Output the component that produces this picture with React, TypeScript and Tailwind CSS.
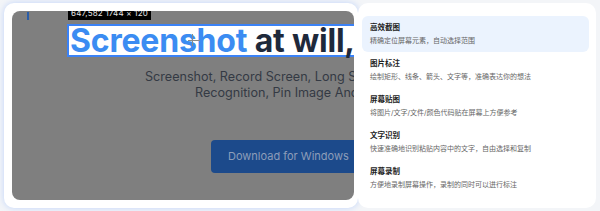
import React from 'react';

interface Feature {
  title: string;
  desc: string;
}

const features: Feature[] = [
  { title: '高效截图', desc: '精确定位屏幕元素，自动选择范围' },
  { title: '图片标注', desc: '绘制矩形、线条、箭头、文字等，准确表达你的想法' },
  { title: '屏幕贴图', desc: '将图片/文字/文件/颜色代码贴在屏幕上方便参考' },
  { title: '文字识别', desc: '快速准确地识别粘贴内容中的文字，自由选择和复制' },
  { title: '屏幕录制', desc: '方便地录制屏幕操作，录制的同时可以进行标注' },
];

const sans = { fontFamily: 'Inter, "Noto Sans CJK SC", sans-serif' };

export default function App() {
  return (
    <div className="w-[600px] h-[211px] bg-[#f3f5f8] overflow-hidden" style={sans}>
      <div className="flex pt-[3px] pl-[4px] h-[208px]">
        {/* preview card */}
        <div className="w-[354px] h-[205px] bg-white rounded-[10px] pl-2 pr-0 py-2 shadow-[0_0_6px_rgba(96,150,255,0.35)]">
          <div className="relative w-[342px] h-[189px] bg-[#7f7f7f] rounded-lg overflow-hidden">
            <div className="absolute left-[15px] top-[1px] w-[2px] h-[8px] bg-[#2a5da8]"></div>
            <div className="absolute left-[56px] top-[-5px] h-[14px] px-[3px] bg-black text-[#e5e5e5] text-[8px] leading-[14px] whitespace-nowrap tracking-[0.2px]">
              647,582 1744 × 120
            </div>

            <div className="pt-[13px] pl-[55px]">
              <div className="w-[320px] h-[33px] border-2 border-[#3b82f6] bg-white whitespace-nowrap text-[32px] font-bold leading-[29px] pl-[1px] tracking-[-0.2px]">
                <span className="text-[#3b8cf2]">Screenshot</span>{' '}
                <span className="text-[#1e293b]">at will, anything</span>
              </div>
            </div>

            <div className="mt-[12px] text-[12.6px] leading-[16px] text-[#343a44] whitespace-nowrap">
              <div className="ml-[133px]">Screenshot, Record Screen, Long Screenshot, Text</div>
              <div className="ml-[183px]">Recognition, Pin Image And Color Picking</div>
            </div>

            <div className="ml-[199px] mt-[39px] w-[180px] h-[33px] rounded-[4px] bg-[#1c4a8b] pl-[17px] text-[11px] leading-[33px] text-[#8c9db9] whitespace-nowrap">
              Download for Windows
            </div>

            {/* crosshair */}
            <div className="absolute left-[176px] top-[29px] w-[12px] h-px bg-[#8a8a8a]"></div>
            <div className="absolute left-[180px] top-[23px] w-px h-[12px] bg-[#8a8a8a]"></div>
          </div>
        </div>

        {/* feature list */}
        <div className="w-[238px] h-[205px] bg-white rounded-[10px] pt-[13px] pl-[4px] pr-[7px]">
          {features.map((f, i) => (
            <div
              key={f.title}
              className={`h-[36px] rounded-[6px] px-2 pt-[7px] ${i === 0 ? 'bg-[#ebf3fe]' : ''}`}
            >
              <div className="text-[7.5px] leading-[10px] font-bold text-[#222]">{f.title}</div>
              <div className="mt-[3px] text-[7px] leading-[10px] text-[#666] whitespace-nowrap">{f.desc}</div>
            </div>
          ))}
        </div>
      </div>
    </div>
  );
}
